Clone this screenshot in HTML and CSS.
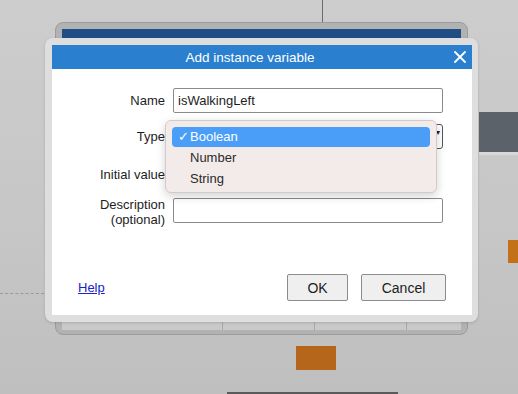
FILE: index.html
```html
<!DOCTYPE html>
<html lang="en">
<head>
  <meta charset="UTF-8">
  <title>Add instance variable</title>
  <link rel="stylesheet" href="styles.css">
</head>
<body>
  <div class="desk">
    <div class="guide-v"></div>
    <div class="guide-h"></div>
    <div class="block slate"></div>
    <div class="block orange-side"></div>
    <div class="block orange-bottom"></div>
    <div class="block bottom-bar"></div>

    <div class="back-window">
      <div class="back-title"></div>
      <div class="back-foot">
        <span></span><span></span><span></span>
      </div>
    </div>

    <div class="dialog">
      <div class="dialog-title">
        <span>Add instance variable</span>
        <button class="close" aria-label="Close">
          <svg width="12" height="12" viewBox="0 0 12 12"><path d="M1 1 L11 11 M11 1 L1 11" stroke="#fff" stroke-width="1.8" stroke-linecap="round"/></svg>
        </button>
      </div>

      <div class="dialog-body">
        <form class="fields">
          <label class="lbl row-name">Name</label>
          <input class="field row-name" type="text" value="isWalkingLeft">

          <label class="lbl row-type">Type</label>
          <div class="select row-type"><span class="arrow">▾</span></div>

          <label class="lbl row-init">Initial value</label>
          <div class="row-init"><input type="checkbox" class="check"></div>

          <label class="lbl row-desc">Description<br>(optional)</label>
          <input class="field row-desc" type="text">
        </form>

        <div class="dialog-foot">
          <a href="#" class="help">Help</a>
          <div class="buttons">
            <button class="btn ok">OK</button>
            <button class="btn cancel">Cancel</button>
          </div>
        </div>
      </div>

      <ul class="popup">
        <li class="selected"><span class="tick">✓</span>Boolean</li>
        <li>Number</li>
        <li>String</li>
      </ul>
    </div>
  </div>
</body>
</html>
```

FILE: styles.css
```css
body {
  margin: 0;
  font-family: "Liberation Sans", Arial, sans-serif;
  font-size: 13px;
  color: #1d1d1d;
}
.desk {
  position: relative;
  width: 518px;
  height: 394px;
  overflow: hidden;
  background: linear-gradient(180deg, #cdcdcd 0%, #c6c6c6 60%, #bfbfbf 100%);
}
.guide-v {
  position: absolute;
  left: 322px;
  top: 0;
  width: 1px;
  height: 22px;
  background: #6a6a6a;
}
.guide-h {
  position: absolute;
  left: 0;
  top: 293px;
  width: 44px;
  border-top: 1px dashed #9a9a9a;
}
.block {
  position: absolute;
}
.slate {
  left: 479px;
  top: 112px;
  width: 39px;
  height: 40px;
  background: #5c6269;
  box-shadow: 0 3px 0 #d8d8d8;
}
.orange-side {
  left: 508px;
  top: 240px;
  width: 10px;
  height: 23px;
  background: #c27119;
}
.orange-bottom {
  left: 296px;
  top: 346px;
  width: 40px;
  height: 24px;
  background: #b5661b;
}
.bottom-bar {
  left: 227px;
  top: 392px;
  width: 171px;
  height: 2px;
  background: #5a5a5a;
}

.back-window {
  position: absolute;
  left: 55px;
  top: 22px;
  width: 413px;
  height: 313px;
  box-sizing: border-box;
  background: #b2b2b2;
  border: 1px solid #9c9c9c;
  border-radius: 8px;
  padding: 6px 6px 0;
}
.back-title {
  height: 10px;
  background: #1f4d84;
}
.back-foot {
  position: absolute;
  left: 6px;
  right: 6px;
  bottom: 4px;
  height: 8px;
  box-sizing: border-box;
  padding-left: 160px;
  background: #c9c9c9;
  display: flex;
  gap: 91px;
}
.back-foot span {
  width: 1px;
  background: #a9a9a9;
}

.dialog {
  position: absolute;
  left: 45px;
  top: 38px;
  width: 433px;
  height: 284px;
  box-sizing: border-box;
  padding: 7px 6px 7px 7px;
  background: #dedede;
  border-radius: 8px;
  box-shadow: 0 1px 3px rgba(0, 0, 0, 0.15);
  display: flex;
  flex-direction: column;
}
.dialog-title {
  position: relative;
  height: 24px;
  padding-right: 24px;
  background: #2a7fcf;
  color: #fff;
  display: flex;
  align-items: center;
  justify-content: center;
  font-size: 13.5px;
}
.close {
  position: absolute;
  right: 6px;
  top: 6px;
  padding: 0;
  border: none;
  background: none;
  line-height: 0;
}
.dialog-body {
  flex: 1;
  background: #fff;
  display: flex;
  flex-direction: column;
  justify-content: space-between;
}
.fields {
  margin: 19px 0 0;
  display: grid;
  grid-template-columns: 113px 270px;
  column-gap: 8px;
  grid-template-rows: 25px 24px 25px 25px;
  row-gap: 12px;
}
.row-type { margin-top: -1px; }
.row-init { margin-top: 1px; }
.row-desc { margin-top: 2px; }
.lbl {
  text-align: right;
  align-self: center;
  line-height: 15px;
}
.field {
  box-sizing: border-box;
  height: 25px;
  margin: 0;
  padding: 0 4px;
  border: 1px solid #8a8a8a;
  border-radius: 2px;
  font: inherit;
  color: #1d1d1d;
}
.select {
  box-sizing: border-box;
  border: 1px solid #555;
  border-radius: 3px;
  position: relative;
}
.arrow {
  position: absolute;
  right: 2px;
  top: 3px;
  font-size: 8px;
}
.check {
  margin: 6px 0 0;
}

.dialog-foot {
  display: flex;
  align-items: center;
  justify-content: space-between;
  padding: 0 26px 14px 26px;
}
.help {
  color: #1a22c9;
  text-decoration: underline;
}
.buttons {
  display: flex;
  gap: 13px;
}
.btn {
  height: 27px;
  box-sizing: border-box;
  border: 1px solid #8c8c8c;
  border-radius: 2px;
  background: #efefef;
  font: inherit;
  font-size: 14px;
  color: #1d1d1d;
  cursor: pointer;
}
.ok { width: 61px; }
.cancel { width: 85px; }

.popup {
  position: absolute;
  left: 120px;
  top: 82px;
  width: 272px;
  height: 73px;
  box-sizing: border-box;
  margin: 0;
  padding: 6px 6px 0;
  list-style: none;
  background: #f3ebe9;
  border: 1px solid #d3cbc9;
  border-radius: 6px;
  box-shadow: 0 3px 10px rgba(0, 0, 0, 0.18);
}
.popup li {
  height: 21px;
  line-height: 21px;
  padding-left: 18px;
  color: #2a2a2a;
}
.popup .selected {
  height: 20px;
  line-height: 20px;
  padding-left: 6px;
  background: #4b9ef7;
  border-radius: 4px;
  color: #fff;
}
.tick {
  display: inline-block;
  width: 12px;
}
```
